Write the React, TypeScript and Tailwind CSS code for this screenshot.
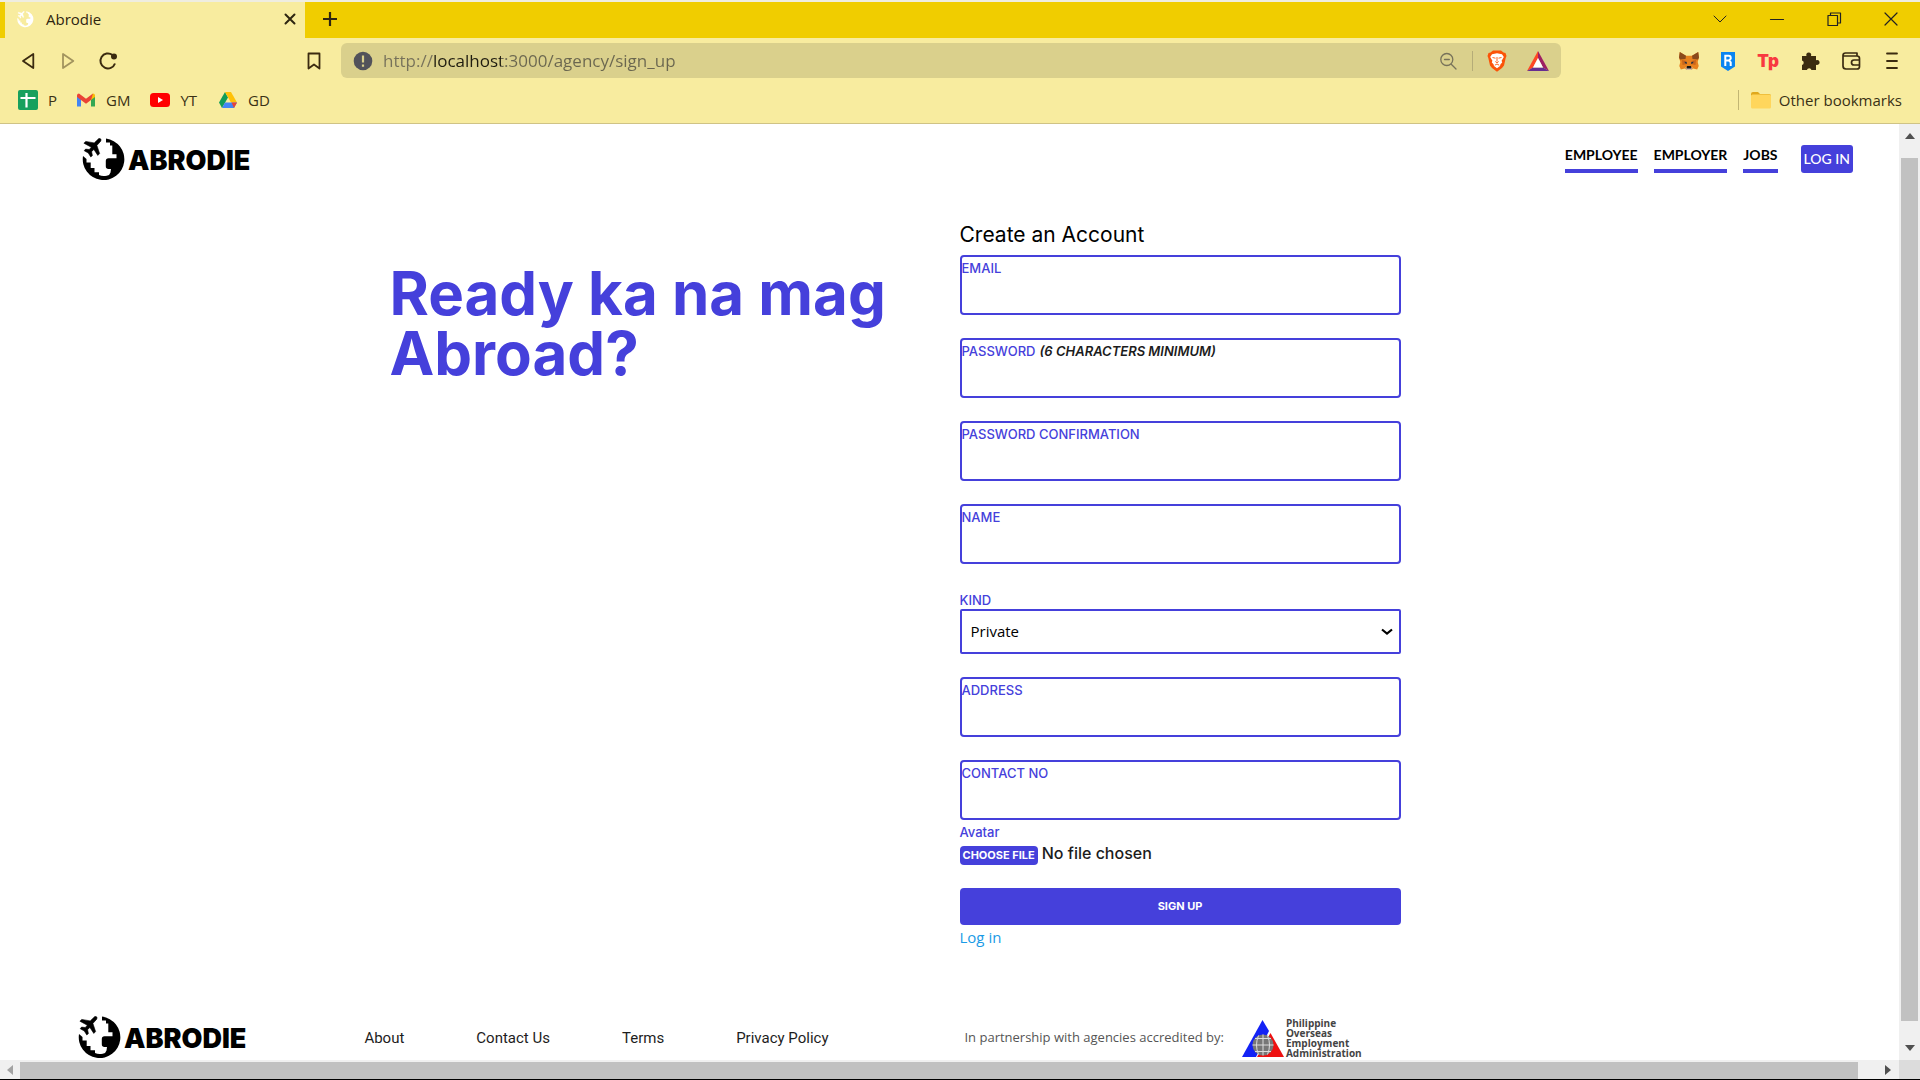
import React from "react";

function Globe({ className }: { className: string }) {
  return (
    <svg viewBox="0 0 44 44" className={className} fill="currentColor" aria-hidden="true">
      <path d="M24 .6 A20.800 20.800 0 1 1 1 18 L4.500 21 V24.500 H8.700 V30 H12.500 V34.300 H17 V37 Q20.500 38.800 24.700 37.700 Q28 37 28.500 34.500 L29 31 H26.500 Q23.800 31 23.800 28.300 V23 Q23.800 20.300 26.500 20.300 H34.500 V16.300 H30.300 V7.500 H28 V4.500 H24 Z" />
      <path d="M16.800 .6 C18.600 .1 19.600 1.300 18.700 3.200 L14.900 7.400 L17.600 15.600 L15.800 17.400 L11.900 11.400 L9.600 13.700 L10.400 17.600 L8.800 19 L6.300 15 L2.200 12.700 L3.600 11.100 L7.300 11.500 L9.300 9.200 L1.900 5.200 L3.700 3.400 L12.200 4.900 Z" stroke="currentColor" strokeWidth=".6" />
    </svg>
  );
}

function Logo() {
  return (
    <a href="#" className="flex items-center text-black">
      <Globe className="h-11 w-11" />
      <span className="ml-0.5 font-['Inter'] text-[27px] leading-none font-black">ABRODIE</span>
    </a>
  );
}

function Icon({ d, className = "", w = 1.7 }: { d: string; className?: string; w?: number }) {
  return (
    <svg viewBox="0 0 20 20" className={`size-5 ${className}`} fill="none" stroke="currentColor" strokeWidth={w} strokeLinejoin="round" strokeLinecap="round" aria-hidden="true">
      <path d={d} />
    </svg>
  );
}

function TabStrip() {
  return (
    <div className="flex h-9 items-stretch bg-[#f0cd00] pl-[5px]">
      <div className="flex w-[300px] items-center bg-[#f8ec9f] pr-[5px] pb-0.5 pl-3">
        <Globe className="size-[17px] text-white" />
        <span className="ml-3 flex-1 text-[15px]">Abrodie</span>
        <button aria-label="Close tab"><Icon d="M5.500 5.500 14.500 14.500M14.500 5.500 5.500 14.500" w={2} /></button>
      </div>
      <button aria-label="New tab" className="ml-[15px] pb-0.5">
        <svg viewBox="0 0 20 20" className="size-5" stroke="#2e2510" strokeWidth="2.2"><path d="M3 10h14M10 3v14" /></svg>
      </button>
      <div className="ml-auto flex items-center pb-0.5 text-[#222]">
        <button aria-label="Search tabs" className="flex w-[57px] justify-center"><Icon d="M4 7l6 6 6-6" w={1} /></button>
        <button aria-label="Minimize" className="flex w-[57px] justify-center"><Icon d="M3.500 10.500h13" w={1.200} /></button>
        <button aria-label="Restore" className="flex w-[57px] justify-center"><Icon d="M4 6.500h9.500v10H4zM6.500 6V4h10v10H14" w={1.200} /></button>
        <button aria-label="Close window" className="flex w-[58px] justify-center"><Icon d="M4 4l12 12M16 4 4 16" w={1.200} /></button>
      </div>
    </div>
  );
}

function BraveIcon() {
  return (
    <svg viewBox="0 0 20 22" className="h-[22px] w-5" aria-hidden="true">
      <path d="M6 .5h8l2.500 2 2 .5 1 3-.8 2-1.700 7.500-2 2.500L10 21.800 5 18 3 15.500 1.300 8 .5 6l1-3 2-.5z" fill="#fb5308" />
      <path d="M5 4.200 10 3.200l5 1 1.800 2.800-2.200 3.800.6 1.800-1.700 1.700L13 16l-3 2.300L7 16l-.5-1.700-1.700-1.700.6-1.800L3.200 7z" fill="#fff" />
      <path d="M5.500 7.500 8.500 8.200M14.500 7.500 11.500 8.200M10 7v4.500M8.300 11.500 10 12.800l1.700-1.300M7.800 15.200 10 14l2.200 1.200" stroke="#fb5308" strokeWidth=".9" fill="none" />
    </svg>
  );
}

function FoxIcon() {
  return (
    <svg viewBox="0 0 20 20" className="size-5" aria-hidden="true">
      <path d="M.8 1 7 4.800h6L19.200 1 20 6.500 18.700 11l1 4-1.500 3.500-4-1-2 1.500H7.800l-2-1.500-4 1L.3 15l1-4L0 6.500z" fill="#e8821e" />
      <path d="M.8 1 7 4.800 6.500 8 1 8.500 0 6.500zM19.200 1 13 4.800l.5 3.200 5.500.5 1-2z" fill="#8a4a1c" />
      <path d="M3 9l4.500 1L8 13 3.500 14zM17 9l-4.500 1-.5 3 4.500 1z" fill="#c9651c" />
      <path d="M5.500 10.500 8 11.500v1.300l-2-.5zM14.500 10.500 12 11.500v1.300l2-.5z" fill="#233447" />
      <path d="M6 16.500h8L12.200 19H7.800z" fill="#d5bfb2" />
      <path d="M8 15h4l.5 2.500h-5z" fill="#161616" />
    </svg>
  );
}

function Toolbar() {
  return (
    <div className="flex h-[45px] items-center pr-[18px] pl-4 text-[#3b2b10]">
      <button aria-label="Back" className="ml-0.5"><Icon d="M15.300 3v14L5 10z" w={1.800} /></button>
      <button aria-label="Forward" className="ml-5 opacity-45"><Icon d="M5 3v14L15.300 10z" w={1.800} /></button>
      <button aria-label="Reload" className="ml-5">
        <svg viewBox="0 0 20 20" className="size-5" fill="none" stroke="currentColor" strokeWidth="2"><path d="M17 12.500A7.500 7.500 0 1 1 14.500 4" /><circle cx="16" cy="5.500" r="2" fill="currentColor" /></svg>
      </button>
      <button aria-label="Bookmark this page" className="ml-[186px]"><Icon d="M4.500 2.500h11v15L10 13.500l-5.500 4z" w={1.800} /></button>
      <div className="ml-[17px] flex h-[35px] min-w-0 flex-1 items-center rounded-md bg-[#dad08c] px-3">
        <svg viewBox="0 0 20 20" className="size-5" aria-hidden="true"><circle cx="10" cy="10" r="9.300" fill="#52525a" /><path d="M10 4.500v7M10 13.500v2.200" stroke="#dad08c" strokeWidth="2.200" /></svg>
        <input aria-label="Page address" defaultValue="http://localhost:3000/agency/sign_up" className="ml-1.5 h-full min-w-0 flex-1 bg-[linear-gradient(90deg,#76715a_54px,#1f1c10_54px,#1f1c10_122px,#6a664f_122px)] bg-clip-text px-1 text-[17px] text-transparent outline-none" />
        <Icon d="M8.800 2.500a6 6 0 1 0 0 12 6 6 0 1 0 0-12M13 13l5 5M6.500 8.500h4.800" w={1.300} className="text-[#77725a]" />
        <span className="mx-3.5 h-5 w-px bg-[#b5ac78]" />
        <BraveIcon />
        <svg viewBox="0 0 22 20" className="ml-5 h-5 w-[22px]" aria-hidden="true"><path d="M11 0 0 20l6-3.500L11 7z" fill="#ff4724" /><path d="M11 0l11 20-6-3.500L11 7z" fill="#9e1f63" /><path d="M0 20h22l-6-3.500H6z" fill="#662d91" /><path d="M11 7l5 9.500H6z" fill="#fff" /></svg>
      </div>
      <div className="ml-[118px] flex items-center gap-[21px]">
        <FoxIcon />
        <svg viewBox="0 0 16 20" className="h-5 w-4" aria-hidden="true"><path d="M1 1h14v14.500L8 20l-7-4.500z" fill="#0a84f0" /><path d="M5.300 15V4.800h3.500a1.900 1.900 0 0 1 1.900 1.900v1L9 9.500l1.700 1.800V15M5.300 9.500H9" fill="none" stroke="#fff" strokeWidth="2" /></svg>
        <span className="font-['Inter'] text-[17px] leading-5 font-black text-[#f8393f]">Tp</span>
        <svg viewBox="0 0 20 20" className="size-5" fill="currentColor" aria-hidden="true"><path d="M2 5h4.500a2.500 2.500 0 1 1 4.500 0h5v4.200a2.500 2.500 0 1 1 0 4.500V19h-4.500a2.400 2.400 0 0 0-4.600 0H2v-5a2.400 2.400 0 0 0 0-4.600z" /></svg>
        <Icon d="M2 4.500Q2 2 4.500 2H16v3M2 4.500V15q0 3 3 3h11q2.500 0 2.500-2.500V7.500Q18.500 5 16 5H3M18.500 9H13a2.500 2.500 0 0 0 0 5h5.500" />
        <button aria-label="Menu"><Icon d="M5 2.500h10M5 10h10M5 17h10" w={1.800} /></button>
      </div>
    </div>
  );
}

function Bookmarks() {
  return (
    <div className="flex h-10 items-start px-[18px] pt-px text-[15px] text-[#3a3115]">
      <a href="#" className="flex h-8 items-center gap-2.5">
        <svg viewBox="0 0 20 20" className="size-5" aria-hidden="true"><rect width="20" height="20" rx="2" fill="#17a05d" /><path d="M2.500 8h15M8.500 3v14.500" stroke="#fff" strokeWidth="2.200" /></svg>P
      </a>
      <a href="#" className="ml-5 flex h-8 items-center gap-[11px]">
        <svg viewBox="0 0 18 14" className="h-3.5 w-[18px]" aria-hidden="true"><path d="M0 2v11.500h4V6z" fill="#4285f4" /><path d="M18 2v11.500h-4V6z" fill="#34a853" /><path d="M14 2.500 16 .5q2 0 2 2V4l-4 3z" fill="#fbbc04" /><path d="M0 2.500Q0 .5 2 .5l7 5.200 7-5.200-2 6.500-5 3.700L4 7 0 4z" fill="#ea4335" /></svg>GM
      </a>
      <a href="#" className="ml-5 flex h-8 items-center gap-2.5">
        <svg viewBox="0 0 20 14" className="h-3.5 w-5" aria-hidden="true"><rect width="20" height="14" rx="3.500" fill="#f00" /><path d="M8 4v6l5-3z" fill="#fff" /></svg>YT
      </a>
      <a href="#" className="ml-[22px] flex h-8 items-center gap-[11px]">
        <svg viewBox="0 0 18 16" className="h-4 w-[18px]" aria-hidden="true"><path d="M6 0 0 10.500 3 16 9 5.400z" fill="#0f9d58" /><path d="M6 0h6l6 10.500h-6z" fill="#ffc107" /><path d="M6 10.500h12L15 16H3z" fill="#4285f4" /><path d="M12.500 10.500H18L15 16z" fill="#ea4335" /></svg>GD
      </a>
      <div className="ml-auto flex h-8 items-center">
        <span className="h-5 w-px bg-[#c2b673]" />
        <a href="#" className="ml-3 flex items-center gap-2">
          <svg viewBox="0 0 20 17" className="h-[17px] w-5" aria-hidden="true"><path d="M0 2q0-2 2-2h5l2 2h9q2 0 2 2v9H0z" fill="#e0a81c" /><rect y="2.500" width="20" height="14" rx="1.500" fill="#ffd65c" /></svg>
          Other bookmarks
        </a>
      </div>
    </div>
  );
}

const labelText = "text-[13px] leading-4 font-medium text-[#4540db]";

function Field({ id, label, hint, type = "text" }: { id: string; label: string; hint?: string; type?: string }) {
  return (
    <div className="mb-[23px] flex h-[60px] flex-col rounded-sm border-2 border-[#4540db] pt-[3px]">
      <label htmlFor={id} className={`${labelText} uppercase`}>
        {label}
        {hint && <em className="ml-1 font-semibold text-[#1c1c1c]">{hint}</em>}
      </label>
      <input id={id} type={type} className="w-full flex-1 bg-transparent px-2 text-sm outline-none" />
    </div>
  );
}

function SignUpForm() {
  return (
    <form className="w-[441px] max-w-full font-['Inter']" onSubmit={(e) => e.preventDefault()}>
      <h2 className="mb-1.5 pt-0.5 text-[21px] leading-7 text-black">Create an Account</h2>
      <Field id="email" label="Email" type="email" />
      <Field id="password" label="Password" hint="(6 characters minimum)" type="password" />
      <Field id="confirm" label="Password confirmation" type="password" />
      <Field id="name" label="Name" />
      <div className="mb-[23px] pt-1">
        <label htmlFor="kind" className={`${labelText} block pt-px pb-px uppercase`}>Kind</label>
        <div className="relative">
          <select id="kind" className="block h-[45px] w-full appearance-none rounded-[2px] border-2 border-[#4540db] bg-white px-[9px] font-['Open_Sans'] text-[15px] text-black">
            <option>Private</option>
            <option>Government</option>
          </select>
          <svg viewBox="0 0 12 8" className="pointer-events-none absolute top-1/2 right-2 h-2 w-3 -translate-y-1/2" fill="none" stroke="#000" strokeWidth="2.200" aria-hidden="true"><path d="M1 1.500l5 4 5-4" /></svg>
        </div>
      </div>
      <Field id="address" label="Address" />
      <Field id="contact" label="Contact no" />
      <div className="-mt-[19px]">
        <label htmlFor="avatar" className={`${labelText} block`}>Avatar</label>
        <input id="avatar" type="file" className="mt-px block w-full text-[16px] leading-6 font-medium text-[#1c1c1c] file:mr-1 file:h-[19px] file:rounded-sm file:bg-[#4540db] file:px-[3px] file:text-[11px] file:leading-4 file:font-bold file:text-white file:uppercase" />
      </div>
      <button type="submit" className="mt-[23px] block h-[37px] w-full rounded-sm bg-[#4540db] text-[11px] font-bold text-white uppercase">Sign up</button>
      <a href="#" className="block font-['Open_Sans'] text-[15px] leading-6 text-[#1a9be6]">Log in</a>
    </form>
  );
}

function SiteHeader() {
  const links = ["Employee", "Employer", "Jobs"];
  return (
    <header className="flex items-start justify-between pt-[14px] pr-[46px] pl-[82px]">
      <Logo />
      <nav className="mt-[7px] flex items-start gap-4 font-['Lato'] text-[14px] font-bold">
        {links.map((l) => (
          <a key={l} href="#" className="h-7 border-b-4 border-[#4540db] leading-5 text-black uppercase">{l}</a>
        ))}
        <a href="#" className="ml-[7px] h-7 rounded-[3px] bg-[#4540db] px-[3px] leading-7 font-medium text-white uppercase">Log in</a>
      </nav>
    </header>
  );
}

function SiteFooter() {
  return (
    <footer className="flex items-center pl-[78px]">
      <Logo />
      <nav className="ml-[118px] flex gap-[72px] font-['Roboto'] text-[15px] text-[#1d1d1d]">
        {["About", "Contact Us", "Terms", "Privacy Policy"].map((l) => (
          <a key={l} href="#">{l}</a>
        ))}
      </nav>
      <p className="ml-[136px] font-['Open_Sans'] text-[13px] text-[#555]">In partnership with agencies accredited by:</p>
      <div className="ml-[18px] flex items-center">
        <svg viewBox="0 0 42 37" className="h-[37px] w-[42px]" aria-hidden="true">
          <path d="M20.500 0 0 37h14L27 11z" fill="#1322f5" />
          <path d="M28.500 13 42 37H15z" fill="#ee1111" />
          <circle cx="21" cy="25" r="10.500" fill="#777" />
          <path d="M10.500 25h21M13 18.500h16M13 31.500h16M21 14.500v21M16.500 15.500q-4 9.500 0 19M25.500 15.500q4 9.500 0 19" stroke="#ddd" fill="none" />
        </svg>
        <p className="ml-0.5 font-['Open_Sans'] text-[10px] leading-[10px] font-bold text-[#444]">
          Philippine<br />Overseas<br />Employment<br />Administration
        </p>
      </div>
    </footer>
  );
}

export default function App() {
  return (
    <div className="flex h-screen flex-col overflow-hidden border-b border-black bg-white font-['Open_Sans',sans-serif] text-[#2e2510]">
      <div className="shrink-0 border-b border-[#cfc385] bg-[#f8ec9f]">
        <div className="h-0.5 bg-[#efede0]" />
        <TabStrip />
        <Toolbar />
        <Bookmarks />
      </div>
      <div className="flex min-h-0 flex-1">
        <div className="flex min-w-0 flex-1 flex-col overflow-hidden">
          <SiteHeader />
          <main className="mx-auto mt-[37px] grid w-full max-w-[1140px] grid-cols-2">
            <h1 className="px-2.5 pt-11 font-['Inter'] text-[60px] leading-[60px] font-bold text-[#4540db]">Ready ka na mag Abroad?</h1>
            <div className="px-2.5"><SignUpForm /></div>
          </main>
          <div className="mt-auto"><SiteFooter /></div>
        </div>
        <div className="flex w-[21px] flex-col items-center bg-[#f0f0f0]" aria-hidden="true">
          <svg viewBox="0 0 10 6" className="my-[9px] h-1.5 w-2.5" fill="#505050"><path d="M5 0l5 6H0z" /></svg>
          <div className="mt-[10px] w-[17px] flex-1 bg-[#c1c1c1]" />
          <svg viewBox="0 0 10 6" className="mt-6 mb-[9px] h-1.5 w-2.5" fill="#505050"><path d="M0 0h10L5 6z" /></svg>
        </div>
      </div>
      <div className="flex h-[19px] shrink-0 items-center bg-[#f0f0f0]" aria-hidden="true">
        <svg viewBox="0 0 6 10" className="mx-[7px] h-2.5 w-1.5" fill="#a3a3a3"><path d="M6 0v10L0 5z" /></svg>
        <div className="mt-0.5 h-[17px] flex-1 bg-[#c1c1c1]" />
        <svg viewBox="0 0 6 10" className="mr-2 ml-[27px] h-2.5 w-1.5" fill="#505050"><path d="M0 0l6 5-6 5z" /></svg>
        <div className="h-full w-[21px] bg-[#dcdcdc]" />
      </div>
    </div>
  );
}
